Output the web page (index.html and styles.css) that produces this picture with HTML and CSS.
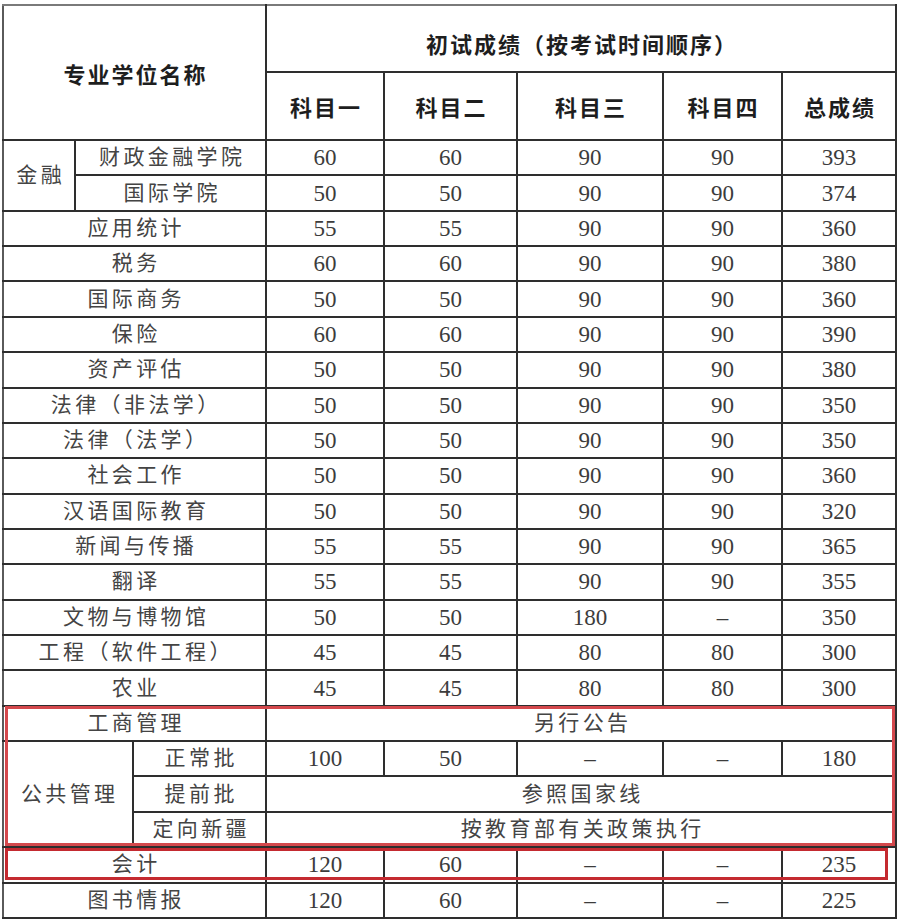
FILE: index.html
```html
<!DOCTYPE html>
<html lang="zh-CN">
<head>
<meta charset="utf-8">
<title>专业学位复试分数线</title>
<link rel="stylesheet" href="styles.css">
</head>
<body>
<div class="sheet">
  <table class="scores">
    <colgroup>
      <col class="c-a"><col class="c-b"><col class="c-c">
      <col class="c-1"><col class="c-2"><col class="c-3"><col class="c-4"><col class="c-t">
    </colgroup>
    <thead>
      <tr class="h1">
        <th colspan="3" rowspan="2" class="hname">专业学位名称</th>
        <th colspan="5" class="hgroup">初试成绩（按考试时间顺序）</th>
      </tr>
      <tr class="h2">
        <th>科目一</th><th>科目二</th><th>科目三</th><th>科目四</th><th>总成绩</th>
      </tr>
    </thead>
    <tbody>
      <tr><td rowspan="2" class="name">金融</td><td colspan="2" class="name">财政金融学院</td><td>60</td><td>60</td><td>90</td><td>90</td><td>393</td></tr>
      <tr><td colspan="2" class="name">国际学院</td><td>50</td><td>50</td><td>90</td><td>90</td><td>374</td></tr>
      <tr><td colspan="3" class="name">应用统计</td><td>55</td><td>55</td><td>90</td><td>90</td><td>360</td></tr>
      <tr><td colspan="3" class="name">税务</td><td>60</td><td>60</td><td>90</td><td>90</td><td>380</td></tr>
      <tr><td colspan="3" class="name">国际商务</td><td>50</td><td>50</td><td>90</td><td>90</td><td>360</td></tr>
      <tr><td colspan="3" class="name">保险</td><td>60</td><td>60</td><td>90</td><td>90</td><td>390</td></tr>
      <tr><td colspan="3" class="name">资产评估</td><td>50</td><td>50</td><td>90</td><td>90</td><td>380</td></tr>
      <tr><td colspan="3" class="name">法律（非法学）</td><td>50</td><td>50</td><td>90</td><td>90</td><td>350</td></tr>
      <tr><td colspan="3" class="name">法律（法学）</td><td>50</td><td>50</td><td>90</td><td>90</td><td>350</td></tr>
      <tr><td colspan="3" class="name">社会工作</td><td>50</td><td>50</td><td>90</td><td>90</td><td>360</td></tr>
      <tr><td colspan="3" class="name">汉语国际教育</td><td>50</td><td>50</td><td>90</td><td>90</td><td>320</td></tr>
      <tr><td colspan="3" class="name">新闻与传播</td><td>55</td><td>55</td><td>90</td><td>90</td><td>365</td></tr>
      <tr><td colspan="3" class="name">翻译</td><td>55</td><td>55</td><td>90</td><td>90</td><td>355</td></tr>
      <tr><td colspan="3" class="name">文物与博物馆</td><td>50</td><td>50</td><td>180</td><td>–</td><td>350</td></tr>
      <tr><td colspan="3" class="name">工程（软件工程）</td><td>45</td><td>45</td><td>80</td><td>80</td><td>300</td></tr>
      <tr><td colspan="3" class="name">农业</td><td>45</td><td>45</td><td>80</td><td>80</td><td>300</td></tr>
      <tr><td colspan="3" class="name">工商管理</td><td colspan="5" class="name">另行公告</td></tr>
      <tr><td colspan="2" rowspan="3" class="name">公共管理</td><td class="name">正常批</td><td>100</td><td>50</td><td>–</td><td>–</td><td>180</td></tr>
      <tr><td class="name">提前批</td><td colspan="5" class="name">参照国家线</td></tr>
      <tr><td class="name">定向新疆</td><td colspan="5" class="name">按教育部有关政策执行</td></tr>
      <tr><td colspan="3" class="name">会计</td><td>120</td><td>60</td><td>–</td><td>–</td><td>235</td></tr>
      <tr><td colspan="3" class="name">图书情报</td><td>120</td><td>60</td><td>–</td><td>–</td><td>225</td></tr>
    </tbody>
  </table>
  <div class="mark mark-group"></div>
  <div class="mark mark-row"></div>
</div>
</body>
</html>
```
FILE: styles.css
```css
html, body {
  margin: 0;
  padding: 0;
  background: #ffffff;
}

.sheet {
  position: relative;
  width: 900px;
  height: 924px;
  padding: 4px 0 0 2px;
  box-sizing: border-box;
}

.scores {
  border-collapse: collapse;
  table-layout: fixed;
  width: 893px;
  font-family: "Liberation Serif", "Noto Sans CJK SC", serif;
  color: #3c3c3c;
}

.c-a { width: 72px; }
.c-b { width: 58px; }
.c-c { width: 133px; }
.c-1 { width: 118px; }
.c-2 { width: 133px; }
.c-3 { width: 146px; }
.c-4 { width: 119px; }
.c-t { width: 114px; }

.scores th,
.scores td {
  border: 2px solid #2e2e2e;
  padding: 0;
  text-align: center;
  vertical-align: middle;
  overflow: hidden;
  white-space: nowrap;
}

.scores th {
  font-family: "Noto Sans CJK SC", sans-serif;
  font-weight: 700;
  font-size: 22px;
  letter-spacing: 2px;
  text-indent: 2px;
  color: #1e1e1e;
}

.scores .h1 th {
  border-top-color: #7a7a7a;
}

.scores .h1 {
  height: 67px;
}

.scores .h2 {
  height: 68px;
}

.scores .hgroup {
  padding-top: 8px;
}

.scores tbody tr {
  height: 35.36px;
}

.scores td {
  font-size: 23px;
  line-height: 1;
}

.scores td.name {
  font-size: 21px;
  letter-spacing: 3.4px;
  text-indent: 3.4px;
  color: #444444;
}

.scores tr > :first-child {
  border-left-color: #5a5a5a;
}

.mark {
  position: absolute;
  border: 3px solid #d0393e;
  box-sizing: border-box;
}

.mark-group {
  left: 5px;
  top: 706px;
  width: 890px;
  height: 140px;
  border-color: #d4484c;
}

.mark-row {
  left: 5px;
  top: 848px;
  width: 883px;
  height: 32px;
  border-color: #c42a30;
}
```
